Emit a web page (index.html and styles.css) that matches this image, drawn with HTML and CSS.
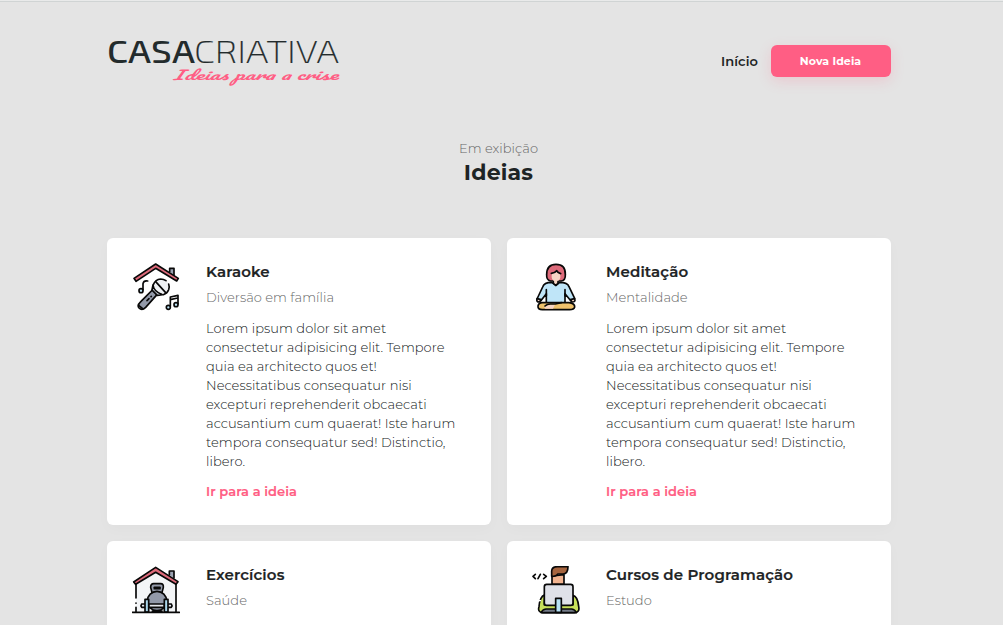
FILE: index.html
```html
<!DOCTYPE html>
<html lang="pt-BR">
<head>
<meta charset="utf-8">
<title>Casa Criativa</title>
<link rel="stylesheet" href="styles.css">
</head>
<body>
<div class="page">
<header class="header">
<svg class="logo" viewBox="0 0 232 46" role="img" aria-label="Casa Criativa">
<text class="logo-bold" x="-1" y="24" textLength="88" lengthAdjust="spacingAndGlyphs">CASA</text>
<text class="logo-thin" x="86" y="24" textLength="145" lengthAdjust="spacingAndGlyphs">CRIATIVA</text>
<text class="logo-tag" x="65" y="41" textLength="165" lengthAdjust="spacingAndGlyphs">Ideias para a crise</text>
</svg>
<nav class="nav"><a class="nav-link">Início</a><a class="button"><span>Nova Ideia</span></a></nav>
</header>
<section class="heading"><p>Em exibição</p><h1>Ideias</h1></section>
<main class="ideas">
<article class="card">
<svg class="icon" viewBox="21 24 144 144">
<path class="o" fill="#9aa2b2" d="M134 50V40H147V61"/>
<path class="o" fill="#dd6a7a" d="M27 70 92 27 160 70 155 78 92 40 33 79Z"/>
<circle cx="108" cy="96" r="24" fill="#f0f2f5"/>
<path class="o" d="M85 89Q91 73 107 72 116 72 123 77M131 87Q134 95 131 104 127 115 115 119"/>
<path class="o" d="M92 80 122 113"/>
<path class="o" fill="#9299a9" d="M82 105 96 119 62 157Q51 168 42 159 35 151 48 139Z"/>
<path class="o" fill="#c9ced8" d="M84 90Q86 109 112 119L97 121 81 105Z"/>
<path class="o" d="M66 137 72 131M78 125 79 124M41 151 53 161M68 78Q56 76 54 86V104M136 154V126L159 121V147M136 134 158 129"/>
<circle class="o" cx="48" cy="107" r="6" fill="#bde4f5"/><circle class="o" cx="130" cy="157" r="6" fill="#bde4f5"/><circle class="o" cx="153" cy="149" r="6" fill="#bde4f5"/>
</svg>
<div class="content"><h2>Karaoke</h2><h3>Diversão em família</h3>
<p>Lorem ipsum dolor sit amet<br>consectetur adipisicing elit. Tempore<br>quia ea architecto quos et!<br>Necessitatibus consequatur nisi<br>excepturi reprehenderit obcaecati<br>accusantium cum quaerat! Iste harum<br>tempora consequatur sed! Distinctio,<br>libero.</p>
<a class="more">Ir para a ideia</a></div>
</article>
<article class="card">
<svg class="icon" viewBox="21 24 144 144">
<path class="o" fill="#dd6a7a" d="M76 78Q64 75 65 59 65 28 93 28 122 28 121 59 122 76 109 78Z"/>
<path class="o" fill="#bfe5f8" d="M80 82Q57 82 53 96L36 132 47 138 64 116V145H120V116L138 138 149 130 132 95Q128 82 104 82L93 91Z"/>
<path fill="#f7d5c4" d="M80 56Q91 54 95 47 98 55 106 57V68Q104 75 99 78V85L92 91 86 85V78Q80 74 80 67Z"/>
<path class="o" d="M79 55Q90 54 95 47 98 54 107 56M85 80V85L92 91 99 85V80M64 104V122M120 104V122"/>
<path class="o" fill="#f7d5c4" d="M36 131Q33 141 43 141L49 134ZM149 131Q153 141 141 141L136 134Z"/>
<path class="o" fill="#efc26c" d="M52 143H132Q150 145 149 156 147 164 134 164H52Q38 164 39 153 41 143 52 143Z"/>
<path fill="#f7d5c4" d="M58 158Q62 149 76 149H90L84 161H61Z"/>
<path class="o" d="M60 153Q66 147 76 147H91L109 143"/>
</svg>
<div class="content"><h2>Meditação</h2><h3>Mentalidade</h3>
<p>Lorem ipsum dolor sit amet<br>consectetur adipisicing elit. Tempore<br>quia ea architecto quos et!<br>Necessitatibus consequatur nisi<br>excepturi reprehenderit obcaecati<br>accusantium cum quaerat! Iste harum<br>tempora consequatur sed! Distinctio,<br>libero.</p>
<a class="more">Ir para a ideia</a></div>
</article>
<article class="card">
<svg class="icon" viewBox="21 18 144 144">
<path fill="#f3f5f7" d="M33 68 92 32 153 68V156H33Z"/>
<path class="o" d="M33 70V114M33 129V130M33 142V155M153 70V155"/>
<path class="o" fill="#9aa2b2" d="M133 45V33H147V54"/>
<path class="o" fill="#dd6a7a" d="M26 66 92 22 159 65 153 73 92 37 32 73Z"/>
<path class="o" fill="#9299a9" d="M81 98 77 82Q77 71 86 71H107Q116 71 115 82L111 98"/>
<path class="o" fill="#fff" d="M88 82H105V86H88Z"/>
<circle class="o" cx="96" cy="123" r="29" fill="#9299a9"/>
<path class="o" fill="#e4e7ed" d="M60 132H50Q46 137 50 142H60M129 132H139Q143 137 139 142H129M71 132H118V142H71Z"/>
<path class="o" fill="#acd9ee" d="M60 118H71V156H60ZM118 118H129V156H118Z"/>
<path class="o" d="M22 157H163M82 153H111"/>
</svg>
<div class="content"><h2>Exercícios</h2><h3>Saúde</h3></div>
</article>
<article class="card">
<svg class="icon" viewBox="21 18 144 144">
<path class="o" fill="#f1b38f" d="M81 48V73H117V44Z"/>
<path class="o" fill="#a6653f" d="M80 49V33Q81 20 97 20H129Q129 41 114 42H98Q95 49 80 49Z"/>
<path class="o" fill="#c8e05b" d="M59 104Q44 110 42 140 37 156 53 158H148Q165 158 161 139 158 109 144 106V135H58Z"/>
<path class="o" fill="#737b88" d="M49 158Q51 149 63 147H140Q151 149 154 158Z"/>
<rect class="o" x="58" y="73" width="86" height="63" rx="7" fill="#dfe1e8"/>
<path class="o" fill="#b7e2f7" d="M92 115H109V157H92Z"/>
<path class="o" d="M31 43 24 49 31 56M46 43 39 56M56 43 64 49 56 56"/>
<path d="M38 122h10" stroke="#fff" stroke-width="4"/>
</svg>
<div class="content"><h2>Cursos de Programação</h2><h3>Estudo</h3></div>
</article>
</main>
</div>
</body>
</html>
```
FILE: styles.css
```css
* { box-sizing: border-box; margin: 0; padding: 0; }
html, body { height: 100%; overflow: hidden; }
html { background: #e9eaea; }
body { height: 624px; margin-top: 1px; background: #e4e4e4; color: #1e2425; font-family: Montserrat, Inter, sans-serif; box-shadow: inset 0 1px #d0d4d4; }
.page { width: 816px; height: 624px; overflow: hidden; padding: 0 16px; margin-left: 91px; }
.header { display: flex; justify-content: space-between; padding-top: 38px; height: 137px; }
.logo { width: 232px; height: 46px; margin-left: 1px; overflow: visible; }
.logo-bold { font: 500 31.5px "Exo 2", Exo, Inter, sans-serif; fill: #232b2c; }
.logo-thin { font: 200 31.5px "Exo 2", Exo, Inter, sans-serif; fill: #232b2c; stroke: #232b2c; stroke-width: .2; }
.logo-tag { font: italic 400 12.5px Pacifico, Yesteryear, "Brush Script MT", "Dancing Script", "Liberation Serif", serif; fill: #ff5e84; }
.nav { display: flex; align-items: center; gap: 13px; height: 32px; margin-top: 6px; }
.nav-link { font-size: 13px; font-weight: 600; letter-spacing: .1px; }
.button { display: flex; align-items: center; justify-content: center; width: 120px; height: 32px; border-radius: 6px; background: #ff5e84; color: #fff; font-size: 11px; font-weight: 700; letter-spacing: .1px; padding-right: 1px; box-shadow: 0 4px 14px rgba(255, 94, 132, .2); }
.heading { text-align: center; height: 100px; padding-right: 1px; }
.heading p { font-size: 13px; font-weight: 300; line-height: 20px; color: #666; letter-spacing: .05px; }
.heading h1 { font-size: 22px; font-weight: 700; line-height: 28px; padding-top: 1px; letter-spacing: .2px; }
.ideas { display: grid; grid-template-columns: 384px 384px; grid-auto-rows: 287px; gap: 16px; }
.card { display: flex; gap: 26px; padding: 25px; background: #fff; border-radius: 6px; box-shadow: 0 4px 14px rgba(0, 0, 0, .025); }
.icon { width: 48px; height: 48px; flex: none; }
.o { stroke: #080808; stroke-width: 5; stroke-linejoin: round; stroke-linecap: round; }
.o:not([fill]) { fill: none; }
.content { white-space: nowrap; }
.content h2 { font-size: 15px; font-weight: 600; line-height: 18px; letter-spacing: .14px; -webkit-text-stroke: .2px; }
.content h3 { font-size: 13px; font-weight: 300; line-height: 16px; margin-top: 8px; color: #666; letter-spacing: .05px; }
.content p { font-size: 13px; font-weight: 300; line-height: 19px; margin-top: 14px; letter-spacing: .055px; color: #111718; }
.more { display: block; font-size: 13px; font-weight: 600; line-height: 16px; margin-top: 12px; color: #ff5e84; letter-spacing: .05px; -webkit-text-stroke: .15px; }
```
